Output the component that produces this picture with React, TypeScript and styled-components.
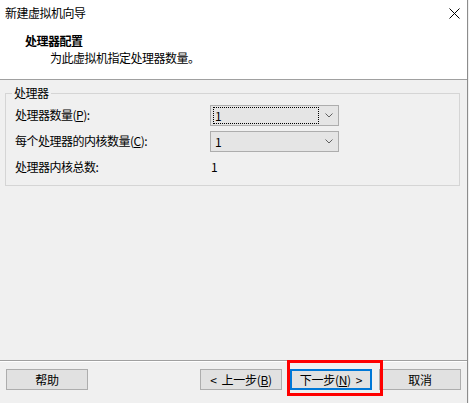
import React from "react";
import styled, { createGlobalStyle } from "styled-components";

const Global = createGlobalStyle`
  html, body { margin: 0; padding: 0; background: #f0f0f0; }
  body { font-family: "Noto Sans CJK SC", "Noto Sans", sans-serif; font-size: 12px; color: #000; letter-spacing: -0.5px; }
`;

const Window = styled.div`
  width: 467px;
  height: 403px;
  border-right: 1px solid #8c8c8c;
  background: #f0f0f0;
  display: flex;
  flex-direction: column;
  overflow: hidden;
`;

const Header = styled.div`
  height: 79px;
  background: #fff;
  border-bottom: 1px solid #a0a0a0;
  display: flex;
  flex-direction: column;
  flex-shrink: 0;
`;

const TitleBar = styled.div`
  height: 26px;
  display: flex;
  align-items: center;
  justify-content: space-between;
  padding: 0 7px 0 5px;
  line-height: 16px;
`;

const Heading = styled.div`
  margin-top: 7px;
  padding-left: 25px;
  line-height: 16px;
  font-weight: 700;
`;

const Subtitle = styled.div`
  margin-top: 1px;
  padding-left: 50px;
  line-height: 16px;
`;

const Body = styled.div`
  flex: 1;
  padding: 13px 7px 0 5px;
`;

const GroupBox = styled.div`
  position: relative;
  border: 1px solid #d5d5d5;
  padding: 8px 0 5px 9px;
`;

const Legend = styled.span`
  position: absolute;
  top: -9px;
  left: 6px;
  padding: 0 2px;
  line-height: 16px;
  background: #f0f0f0;
`;

const Row = styled.div`
  display: grid;
  grid-template-columns: 195px 129px;
  align-items: center;
  height: 26px;
  line-height: 16px;
`;

const Combo = styled.div`
  height: 21px;
  box-sizing: border-box;
  border: 1px solid #adadad;
  background: #e5e5e5;
  display: flex;
  align-items: center;
  padding-left: 2px;
`;

const ComboValue = styled.span<{ $focused?: boolean }>`
  width: 106px;
  height: 17px;
  box-sizing: border-box;
  border: 1px dotted ${(p) => (p.$focused ? "#000" : "transparent")};
  line-height: 15px;
  padding-left: 1px;
`;

const Chevron = styled.span`
  flex: 1;
  display: flex;
  justify-content: center;
  align-items: center;
`;

const Value = styled.span`
  padding-left: 1px;
`;

const Footer = styled.div`
  height: 34px;
  border-top: 1px solid #a0a0a0;
  box-shadow: inset 0 1px #ffffff;
  display: flex;
  align-items: flex-start;
  padding: 8px 6px 0 6px;
  flex-shrink: 0;
`;

const Button = styled.button<{ $default?: boolean; $gap?: number }>`
  width: 82px;
  height: 21px;
  margin-left: ${(p) => p.$gap ?? 0}px;
  box-sizing: border-box;
  border: ${(p) => (p.$default ? "2px solid #0078d7" : "1px solid #adadad")};
  background: #e1e1e1;
  font-family: "Noto Sans CJK SC", "Noto Sans", sans-serif;
  font-size: 12px;
  letter-spacing: -0.3px;
  line-height: 15px;
  color: #000;
  padding: 0;
  display: flex;
  align-items: center;
  justify-content: center;
  white-space: pre;
`;

const Gap = styled.span`
  display: inline-block;
  width: 5px;
`;

const Spacer = styled.div`
  flex: 1;
`;

const Highlight = styled.div`
  position: relative;
  margin-left: 8px;
  &::after {
    content: "";
    position: absolute;
    left: -3px;
    right: -11px;
    top: -9px;
    bottom: -6px;
    border: 3px solid #ff0000;
    pointer-events: none;
  }
`;

const U = styled.span`
  text-decoration: underline;
  text-underline-offset: 1px;
`;

const CloseIcon = () => (
  <svg width="11" height="11" viewBox="0 0 11 11">
    <path d="M0.5 0.5 L10.5 10.5 M10.5 0.5 L0.5 10.5" stroke="#000" strokeWidth="1" />
  </svg>
);

const ChevronIcon = () => (
  <svg width="8" height="5" viewBox="0 0 8 5">
    <polyline points="0.5,0.5 4,4 7.5,0.5" fill="none" stroke="#606060" strokeWidth="1" />
  </svg>
);

export default function App() {
  return (
    <>
      <Global />
      <Window>
        <Header>
          <TitleBar>
            <span>新建虚拟机向导</span>
            <CloseIcon />
          </TitleBar>
          <Heading>处理器配置</Heading>
          <Subtitle>为此虚拟机指定处理器数量。</Subtitle>
        </Header>
        <Body>
          <GroupBox>
            <Legend>处理器</Legend>
            <Row>
              <span>
                处理器数量(<U>P</U>):
              </span>
              <Combo>
                <ComboValue $focused>1</ComboValue>
                <Chevron>
                  <ChevronIcon />
                </Chevron>
              </Combo>
            </Row>
            <Row>
              <span>
                每个处理器的内核数量(<U>C</U>):
              </span>
              <Combo>
                <ComboValue>1</ComboValue>
                <Chevron>
                  <ChevronIcon />
                </Chevron>
              </Combo>
            </Row>
            <Row>
              <span>处理器内核总数:</span>
              <Value>1</Value>
            </Row>
          </GroupBox>
        </Body>
        <Footer>
          <Button>帮助</Button>
          <Spacer />
          <Button>
            {"<"}<Gap />{"上一步("}<U>B</U>{")"}
          </Button>
          <Highlight>
            <Button $default>
              {"下一步("}<U>N</U>{")"}<Gap />{">"}
            </Button>
          </Highlight>
          <Button $gap={7}>取消</Button>
        </Footer>
      </Window>
    </>
  );
}
